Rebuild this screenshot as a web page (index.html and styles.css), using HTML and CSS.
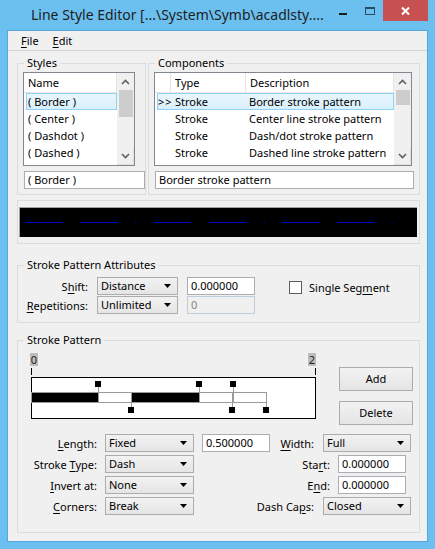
FILE: index.html
```html
<!DOCTYPE html>
<html lang="en">
<head>
<meta charset="utf-8">
<title>Line Style Editor</title>
<link rel="stylesheet" href="styles.css">
</head>
<body>
<div class="window">
  <div class="titlebar">
    <div class="title">Line Style Editor [...\System\Symb\acadlsty....</div>
    <div class="caption">
      <div class="cbtn cbtn-min"><svg width="26" height="21" viewBox="0 0 26 21"><rect x="9" y="13" width="8" height="2" fill="#1e1e1e"/></svg></div>
      <div class="cbtn cbtn-max"><svg width="27" height="21" viewBox="0 0 27 21"><rect x="9.5" y="7.5" width="9" height="7" fill="none" stroke="#2c4a60"/><line x1="9" y1="8.5" x2="19" y2="8.5" stroke="#2c4a60"/></svg></div>
      <div class="cbtn cbtn-close"><svg width="45" height="21" viewBox="0 0 45 21"><path d="M19 7.5 L26 14.5 M26 7.5 L19 14.5" stroke="#fff" stroke-width="2"/></svg></div>
    </div>
  </div>
  <div class="client">
    <div class="menubar"><span class="menu"><u>F</u>ile</span><span class="menu"><u>E</u>dit</span></div>
    <div class="content">
      <div class="top-row">
        <fieldset class="group styles-group">
          <legend>Styles</legend>
          <div class="styles-body">
            <div class="listbox styles-list">
              <div class="lb-main">
                <div class="lb-header"><div class="hcell">Name</div></div>
                <div class="lb-row selected"><div class="cell">( Border )</div></div>
                <div class="lb-row"><div class="cell">( Center )</div></div>
                <div class="lb-row"><div class="cell">( Dashdot )</div></div>
                <div class="lb-row"><div class="cell">( Dashed )</div></div>
              </div>
              <div class="scrollbar">
                <div class="sb-btn"><svg width="17" height="17" viewBox="0 0 17 17"><path d="M5 11 L8.5 7.5 L12 11" fill="none" stroke="#606060" stroke-width="1.6"/></svg></div>
                <div class="sb-track"><div class="sb-thumb thumb-styles"></div></div>
                <div class="sb-btn sb-down"><svg width="17" height="17" viewBox="0 0 17 17"><path d="M5 6 L8.5 9.5 L12 6" fill="none" stroke="#606060" stroke-width="1.6"/></svg></div>
              </div>
            </div>
            <div class="textbox styles-text">( Border )</div>
          </div>
        </fieldset>
        <fieldset class="group comps-group">
          <legend>Components</legend>
          <div class="comps-body">
            <div class="listbox comps-list">
              <div class="lb-main">
                <div class="lb-header comps-header">
                  <div class="hcell hc0"></div>
                  <div class="hcell hc1">Type</div>
                  <div class="hcell hc2">Description</div>
                </div>
                <div class="lb-row comp-row selected"><div class="cell c0">&gt;&gt;</div><div class="cell c1">Stroke</div><div class="cell c2">Border stroke pattern</div></div>
                <div class="lb-row comp-row"><div class="cell c0"></div><div class="cell c1">Stroke</div><div class="cell c2">Center line stroke pattern</div></div>
                <div class="lb-row comp-row"><div class="cell c0"></div><div class="cell c1">Stroke</div><div class="cell c2">Dash/dot stroke pattern</div></div>
                <div class="lb-row comp-row"><div class="cell c0"></div><div class="cell c1">Stroke</div><div class="cell c2">Dashed line stroke pattern</div></div>
              </div>
              <div class="scrollbar">
                <div class="sb-btn"><svg width="17" height="17" viewBox="0 0 17 17"><path d="M5 11 L8.5 7.5 L12 11" fill="none" stroke="#606060" stroke-width="1.6"/></svg></div>
                <div class="sb-track"><div class="sb-thumb thumb-comps"></div></div>
                <div class="sb-btn sb-down"><svg width="17" height="17" viewBox="0 0 17 17"><path d="M5 6 L8.5 9.5 L12 6" fill="none" stroke="#606060" stroke-width="1.6"/></svg></div>
              </div>
            </div>
            <div class="textbox comps-text">Border stroke pattern</div>
          </div>
        </fieldset>
      </div>

      <fieldset class="group preview-group">
        <div class="preview">
          <svg width="397" height="29" viewBox="0 0 397 29">
            <g fill="#0000c8">
              <rect x="5" y="14" width="38" height="1"/>
              <rect x="60" y="14" width="38" height="1"/>
              <rect x="115" y="14" width="1" height="1"/>
              <rect x="134" y="14" width="37" height="1"/>
              <rect x="189" y="14" width="38" height="1"/>
              <rect x="244" y="14" width="1" height="1"/>
              <rect x="262" y="14" width="38" height="1"/>
              <rect x="317" y="14" width="38" height="1"/>
              <rect x="373" y="14" width="1" height="1"/>
            </g>
          </svg>
        </div>
      </fieldset>

      <fieldset class="group attr-group">
        <legend>Stroke Pattern Attributes</legend>
        <div class="attr-grid">
          <div class="lbl">S<u>h</u>ift:</div>
          <div class="combo"><span class="combo-text">Distance</span></div>
          <div class="textbox field">0.000000</div>
          <div class="check-wrap"><span class="checkbox"></span><span>Single Seg<u>m</u>ent</span></div>
          <div class="lbl"><u>R</u>epetitions:</div>
          <div class="combo"><span class="combo-text">Unlimited</span></div>
          <div class="textbox field disabled">0</div>
          <div></div>
        </div>
      </fieldset>

      <fieldset class="group pattern-group">
        <legend>Stroke Pattern</legend>
        <div class="pattern-top">
          <div class="editor">
            <div class="scale"><span class="scale-lbl">0</span><span class="scale-lbl">2</span></div>
            <svg class="pattern-svg" width="287" height="54" viewBox="0 0 287 54">
              <line x1="1.5" y1="2" x2="1.5" y2="9" stroke="#000"/>
              <line x1="285.5" y1="2" x2="285.5" y2="9" stroke="#000"/>
              <rect x="1.5" y="11.5" width="284" height="41" fill="#fff" stroke="#000"/>
              <g stroke="#9a9a9a">
                <rect x="1.5" y="26.5" width="67" height="10" fill="#000"/>
                <rect x="68.5" y="26.5" width="33" height="10" fill="#fff"/>
                <rect x="101.5" y="26.5" width="68" height="10" fill="#000"/>
                <rect x="169.5" y="26.5" width="33" height="10" fill="#fff"/>
                <rect x="202.5" y="26.5" width="34" height="10" fill="#fff"/>
                <line x1="203.5" y1="27" x2="203.5" y2="36"/>
                <line x1="68.5" y1="21" x2="68.5" y2="26"/>
                <line x1="169.5" y1="21" x2="169.5" y2="26"/>
                <line x1="203.5" y1="21" x2="203.5" y2="26"/>
                <line x1="101.5" y1="37" x2="101.5" y2="41"/>
                <line x1="202.5" y1="37" x2="202.5" y2="41"/>
                <line x1="236.5" y1="37" x2="236.5" y2="41"/>
              </g>
              <g fill="#000">
                <rect x="65" y="15" width="6" height="6"/>
                <rect x="166" y="15" width="6" height="6"/>
                <rect x="200" y="15" width="6" height="6"/>
                <rect x="98" y="41" width="6" height="6"/>
                <rect x="199" y="41" width="6" height="6"/>
                <rect x="233" y="41" width="6" height="6"/>
              </g>
            </svg>
          </div>
          <div class="buttons">
            <div class="btn">Add</div>
            <div class="btn">Delete</div>
          </div>
        </div>
        <div class="pattern-grid">
          <div class="lbl"><u>L</u>ength:</div>
          <div class="combo"><span class="combo-text">Fixed</span></div>
          <div class="textbox field">0.500000</div>
          <div class="rcell"><span><u>W</u>idth:</span><div class="combo combo-r"><span class="combo-text">Full</span></div></div>

          <div class="lbl">Stroke <u>T</u>ype:</div>
          <div class="combo"><span class="combo-text">Dash</span></div>
          <div class="rcell rcell-wide rcell-field"><span>Sta<u>r</u>t:</span><div class="textbox field">0.000000</div></div>

          <div class="lbl"><u>I</u>nvert at:</div>
          <div class="combo"><span class="combo-text">None</span></div>
          <div class="rcell rcell-wide rcell-field"><span>E<u>n</u>d:</span><div class="textbox field">0.000000</div></div>

          <div class="lbl"><u>C</u>orners:</div>
          <div class="combo"><span class="combo-text">Break</span></div>
          <div class="rcell rcell-wide"><span>Dash Ca<u>p</u>s:</span><div class="combo combo-r"><span class="combo-text">Closed</span></div></div>
        </div>
      </fieldset>
    </div>
  </div>
</div>
</body>
</html>
```
FILE: styles.css
```css
* { box-sizing: border-box; margin: 0; padding: 0; }

body {
  margin: 0;
  width: 435px;
  height: 549px;
  overflow: hidden;
  font-family: "Noto Sans", "Segoe UI", sans-serif;
  font-size: 11px;
  color: #000;
  background: #6cc0ef;
}

u { text-decoration: underline; text-underline-offset: 2px; text-decoration-thickness: 1px; }

.window {
  width: 435px;
  height: 549px;
  background: #6cc0ef;
  padding: 0 7px 7px;
  display: flex;
  flex-direction: column;
}

.titlebar {
  height: 30px;
  display: flex;
  align-items: flex-start;
}

.title {
  flex: 1;
  padding-left: 24px;
  font-size: 14px;
  line-height: 30px;
  color: #1e1e1e;
  white-space: nowrap;
  overflow: hidden;
}

.caption { display: flex; }
.cbtn { height: 21px; }
.cbtn svg { display: block; }
.cbtn-min { width: 26px; }
.cbtn-max { width: 27px; }
.cbtn-close { width: 45px; background: #c75050; }

.client {
  flex: 1;
  background: #f0f0f0;
  border: 1px solid #56a7da;
  display: flex;
  flex-direction: column;
}

.menubar {
  height: 20px;
  border-bottom: 1px solid #d2d2d2;
  display: flex;
  align-items: center;
  padding-left: 6px;
}

.menu { padding: 0 7px; line-height: 16px; }

.content {
  padding: 5px 7px 0 9px;
  display: flex;
  flex-direction: column;
}

fieldset {
  border: 1px solid #dcdcdc;
  margin: 0;
  padding: 0;
  min-width: 0;
}

legend {
  margin-left: 6px;
  padding: 0 3px;
  line-height: 14px;
}

.top-row { display: flex; gap: 2px; }
.styles-group { width: 129px; }
.comps-group { width: 272px; }

.styles-body { padding: 2px 0 5px 5px; }
.comps-body { padding: 2px 0 5px 5px; }

.listbox {
  height: 94px;
  border: 1px solid #828790;
  background: #fff;
  display: flex;
}
.styles-list { width: 112px; }
.comps-list { width: 258px; }

.lb-main { flex: 1; min-width: 0; }

.lb-header {
  height: 20px;
  border-bottom: 1px solid #e5e5e5;
  display: flex;
}
.hcell {
  line-height: 19px;
  padding-left: 4px;
  border-right: 1px solid #e5e5e5;
  flex: 1;
}
.hc0 { flex: 0 0 16px; padding: 0; }
.hc1 { flex: 0 0 75px; }
.hc2 { flex: 1; }

.lb-row {
  height: 17px;
  margin-left: 2px;
  border: 1px solid transparent;
  line-height: 15px;
  white-space: nowrap;
}
.lb-row .cell { padding-left: 1px; }
.lb-row.selected {
  background: linear-gradient(#eaf6fd, #d9f0fc);
  border-color: #8fd3f6;
}

.comp-row { display: grid; grid-template-columns: 13px 75px 1fr; }
.comp-row .c0 { padding-left: 0; letter-spacing: 1px; }
.comp-row .c1 { padding-left: 4px; }
.comp-row .c2 { padding-left: 3px; }

.scrollbar {
  width: 17px;
  background: #f0f0f0;
  display: flex;
  flex-direction: column;
}
.sb-btn { height: 17px; }
.sb-btn svg { display: block; }
.sb-down { border-right: 1px solid #e0e0e0; border-bottom: 1px solid #e0e0e0; }
.sb-track { flex: 1; padding: 0 1px 0 2px; }
.sb-thumb { background: #cdcdcd; }
.thumb-styles { height: 27px; }
.thumb-comps { height: 15px; }

.textbox {
  height: 18px;
  border: 1px solid #abadb3;
  background: #fff;
  line-height: 16px;
  padding-left: 3px;
  white-space: nowrap;
}
.styles-text { width: 121px; margin: 5px 0 0 1px; }
.comps-text { width: 259px; margin: 5px 0 0 1px; }

.preview-group {
  margin-top: 5px;
  padding: 6px 2px 6px 1px;
}
.preview {
  width: 398px;
  height: 30px;
  background: #000;
  border-top: 1px solid #a0a0a0;
  border-left: 1px solid #a0a0a0;
}
.preview svg { display: block; }

.attr-group { margin-top: 14px; }
.attr-grid {
  padding: 5px 0 8px 0;
  display: grid;
  grid-template-columns: 70px 81px 68px auto;
  column-gap: 9px;
  row-gap: 1px;
  align-items: center;
}

.lbl { text-align: right; white-space: nowrap; }

.combo {
  height: 18px;
  border: 1px solid #acacac;
  background: linear-gradient(#f2f2f2, #e5e5e5);
  display: flex;
  align-items: center;
  padding-left: 3px;
}
.combo-text { flex: 1; line-height: 16px; white-space: nowrap; }
.combo::after {
  content: "";
  width: 7px;
  height: 4px;
  margin-right: 6px;
  background: #000;
  clip-path: polygon(0 0, 100% 0, 50% 100%);
}

.field { width: 68px; }
.field.disabled {
  background: #f0f0f0;
  border-color: #bfcddb;
  color: #838383;
}

.check-wrap {
  display: flex;
  align-items: center;
  gap: 7px;
  margin-left: 25px;
  padding-top: 3px;
  white-space: nowrap;
}
.checkbox {
  width: 13px;
  height: 13px;
  border: 1px solid #5c5c5c;
  background: #fff;
}

.pattern-group { margin-top: 10px; }

.pattern-top {
  display: flex;
  align-items: flex-start;
  padding-left: 12px;
}
.editor { width: 287px; margin-top: 6px; }
.scale {
  height: 13px;
  display: flex;
  justify-content: space-between;
  padding-right: 1px;
}
.scale-lbl {
  width: 8px;
  height: 13px;
  background: #bdbdbd;
  color: #222;
  line-height: 13px;
  text-align: center;
}
.pattern-svg { display: block; }

.buttons {
  margin-left: 22px;
  margin-top: 20px;
  display: flex;
  flex-direction: column;
  gap: 10px;
}
.btn {
  width: 74px;
  height: 24px;
  border: 1px solid #acacac;
  background: linear-gradient(#f2f2f2, #e5e5e5);
  text-align: center;
  line-height: 22px;
}

.pattern-grid {
  margin-top: 9px;
  padding: 0 8px 17px 0;
  display: grid;
  grid-template-columns: 79px 89px 67px minmax(0, 1fr);
  column-gap: 8px;
  row-gap: 3px;
  align-items: center;
}

.rcell {
  display: flex;
  justify-content: flex-end;
  align-items: center;
  gap: 9px;
  white-space: nowrap;
}
.rcell-wide { grid-column: 3 / 5; }
.rcell-field { gap: 8px; padding-right: 5px; }
.combo-r { width: 88px; }
```
